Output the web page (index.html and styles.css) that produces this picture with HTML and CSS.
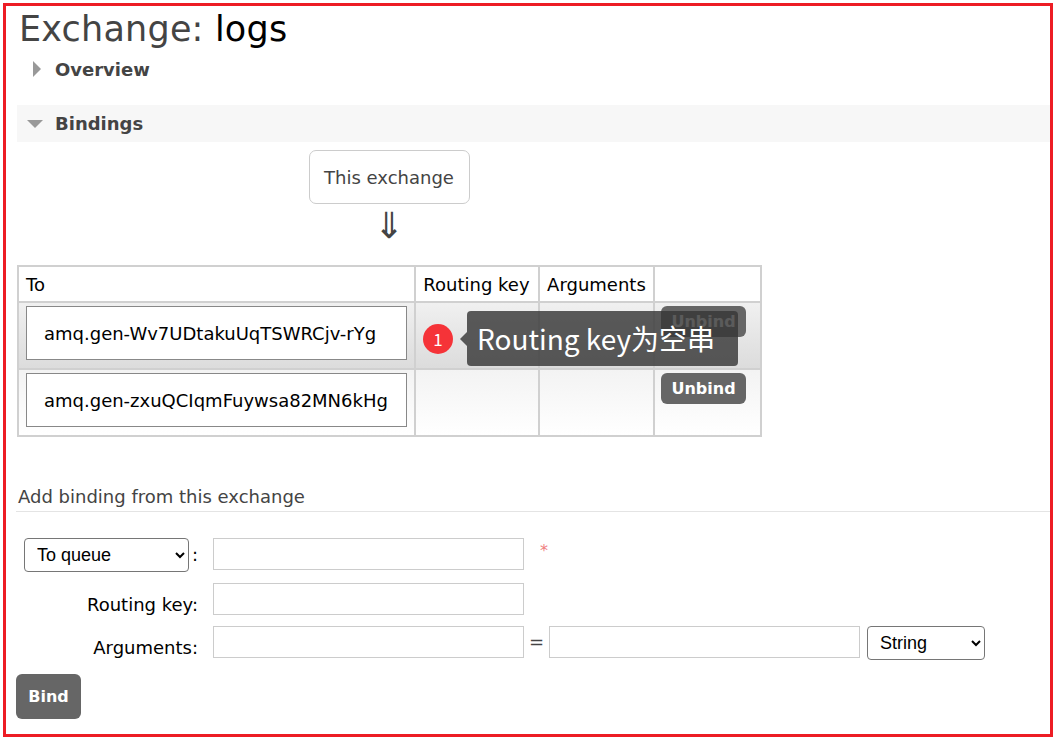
FILE: index.html
```html
<!DOCTYPE html>
<html>
<head>
<meta charset="utf-8">
<link rel="stylesheet" href="styles.css">
</head>
<body>
<div class="frame">
  <h1 class="title">Exchange: <b>logs</b></h1>
  <div class="section closed">
    <span class="tri-right"></span><span class="sec-title">Overview</span>
  </div>
  <div class="section open">
    <span class="tri-down"></span><span class="sec-title">Bindings</span>
  </div>
  <div class="bindings">
    <div class="exbox-wrap">
      <div class="exbox">This exchange</div>
      <div class="arrow">⇓</div>
    </div>
    <div class="table-wrap">
      <table class="list">
        <thead>
          <tr><th class="c-to">To</th><th class="c-rk">Routing key</th><th class="c-args">Arguments</th><th class="c-act"></th></tr>
        </thead>
        <tbody>
          <tr class="alt1">
            <td><span class="qbox">amq.gen-Wv7UDtakuUqTSWRCjv-rYg</span></td>
            <td></td><td></td>
            <td class="act"><button class="btn small">Unbind</button></td>
          </tr>
          <tr class="alt2">
            <td><span class="qbox">amq.gen-zxuQCIqmFuywsa82MN6kHg</span></td>
            <td></td><td></td>
            <td class="act"><button class="btn small">Unbind</button></td>
          </tr>
        </tbody>
      </table>
      <span class="badge">1</span>
      <div class="tip">Routing key为空串</div>
    </div>
    <h3 class="add-title">Add binding from this exchange</h3>
    <div class="form">
      <div class="lbl lbl-sel"><select class="sel sel-dest"><option>To queue</option></select><span class="colon">:</span></div>
      <div class="field"><input class="inp" type="text"><span class="req">*</span></div>
      <div class="lbl">Routing key:</div>
      <div class="field"><input class="inp" type="text"></div>
      <div class="lbl">Arguments:</div>
      <div class="field"><input class="inp" type="text"><span class="eq">=</span><input class="inp" type="text"><select class="sel sel-type"><option>String</option></select></div>
    </div>
    <div class="actions"><button class="btn bind">Bind</button></div>
  </div>
</div>
</body>
</html>
```

FILE: styles.css
```css
html, body {
  margin: 0;
  padding: 0;
  background: #fff;
}
body {
  font-family: "DejaVu Sans", Verdana, sans-serif;
  color: #444;
}
.frame {
  margin: 3px;
  width: 1044px;
  height: 728px;
  border: 3px solid #ed1c24;
  overflow: hidden;
  position: relative;
}
.title {
  margin: 2px 0 0 13px;
  font-size: 35px;
  font-weight: normal;
  line-height: 42px;
  color: #444;
  letter-spacing: 0.2px;
}
.title b {
  font-weight: normal;
  color: #000;
}
.section {
  display: flex;
  align-items: center;
  height: 37px;
  margin-left: 11px;
}
.section.closed {
  height: 30px;
  margin-top: 4px;
}
.section.open {
  background: #f7f7f7;
  margin-top: 21px;
}
.tri-right {
  width: 0;
  height: 0;
  border-top: 8px solid transparent;
  border-bottom: 8px solid transparent;
  border-left: 8px solid #999;
  margin-left: 16px;
  margin-right: 14px;
}
.tri-down {
  width: 0;
  height: 0;
  border-left: 8px solid transparent;
  border-right: 8px solid transparent;
  border-top: 8px solid #999;
  margin-left: 10px;
  margin-right: 12px;
}
.sec-title {
  font-weight: bold;
  font-size: 18px;
  color: #444;
}
.bindings {
  padding-left: 11px;
}
.exbox-wrap {
  display: flex;
  flex-direction: column;
  align-items: center;
  width: 744px;
  margin-top: 8px;
}
.exbox {
  width: 159px;
  height: 52px;
  border: 1px solid #ccc;
  border-radius: 7px;
  display: flex;
  align-items: center;
  justify-content: center;
  font-size: 18px;
  color: #444;
}
.arrow {
  font-size: 36px;
  line-height: 40px;
  height: 40px;
  color: #444;
  margin-top: 2px;
}
.table-wrap {
  position: relative;
  margin-top: 19px;
  width: 745px;
}
.list {
  border-collapse: collapse;
  border: 2px solid #d0d0d0;
  font-size: 18px;
  color: #000;
}
.list th, .list td {
  border: 2px solid #d0d0d0;
  text-align: left;
  font-weight: normal;
  padding: 0;
  vertical-align: top;
}
.list th {
  height: 34px;
  padding: 0 7px;
  vertical-align: middle;
  background: #fff;
}
.c-to { width: 382px; }
.c-rk { width: 108px; }
.c-args { width: 99px; }
.c-act { width: 91px; }
.list td {
  height: 62px;
}
.list td:first-child {
  padding: 3px 7px 0 7px;
}
.alt1 td {
  background: linear-gradient(#f0f0f0, #dcdcdc);
}
.alt2 td {
  background: linear-gradient(#f3f3f3, #fff);
}
.qbox {
  display: flex;
  align-items: center;
  height: 52px;
  border: 1px solid #888;
  background: #fff;
  padding-left: 17px;
  color: #000;
}
.act {
  padding: 3px 0 0 6px !important;
}
.btn {
  font-family: "DejaVu Sans", Verdana, sans-serif;
  font-weight: bold;
  color: #fff;
  background: #666;
  border: none;
  border-radius: 6px;
  font-size: 16px;
  padding: 0;
  cursor: pointer;
}
.btn.small {
  width: 85px;
  height: 31px;
}
.badge {
  position: absolute;
  left: 406px;
  top: 59px;
  width: 30px;
  height: 30px;
  border-radius: 50%;
  background: #f53338;
  color: #fff;
  font-family: "Noto Sans CJK SC", sans-serif;
  font-size: 17px;
  line-height: 30px;
  text-align: center;
}
.tip {
  position: absolute;
  left: 450px;
  top: 46px;
  width: 261px;
  height: 55px;
  padding-left: 10px;
  background: rgba(55, 55, 55, 0.82);
  border-radius: 4px;
  color: #fff;
  font-family: "Noto Sans CJK SC", sans-serif;
  font-size: 28px;
  line-height: 55px;
  white-space: nowrap;
}
.tip::before {
  content: "";
  position: absolute;
  left: -7px;
  top: 21px;
  border-top: 7px solid transparent;
  border-bottom: 7px solid transparent;
  border-right: 7px solid rgba(55, 55, 55, 0.82);
}
.add-title {
  margin: 49px 0 0 -1px;
  padding: 0 0 3px 2px;
  font-size: 18px;
  font-weight: normal;
  color: #444;
  border-bottom: 1px solid #e4e4e4;
  line-height: 22px;
}
.form {
  display: grid;
  grid-template-columns: 181px auto;
  column-gap: 15px;
  row-gap: 11px;
  margin-top: 26px;
  align-items: start;
}
.lbl {
  text-align: right;
  font-size: 18px;
  line-height: 20px;
  padding-top: 12px;
  color: #000;
}
.lbl-sel {
  display: flex;
  align-items: center;
  justify-content: flex-end;
  padding-top: 0;
  line-height: 34px;
  margin-left: -1px;
}
.field {
  display: flex;
  align-items: flex-start;
}
.inp {
  border: 1px solid #ccc;
  padding: 0;
  margin: 0;
  box-sizing: border-box;
  height: 32px;
  width: 311px;
}
.req {
  color: #f08080;
  margin-left: 16px;
  margin-top: 3px;
  font-size: 16px;
}
.colon {
  margin-left: 3px;
  color: #000;
}
.eq {
  width: 25px;
  text-align: center;
  line-height: 32px;
  font-size: 18px;
  color: #444;
}
.sel {
  font-family: "Liberation Sans", Arial, sans-serif;
  font-size: 18px;
  color: #000;
  background: #fff;
  border: 1px solid #767676;
  border-radius: 4px;
  height: 34px;
  padding: 0 6px 0 8px;
  box-sizing: border-box;
  margin: 0;
}
.sel-dest {
  width: 165px;
}
.sel-type {
  width: 118px;
  margin-left: 7px;
}
.actions {
  margin-top: 14px;
  margin-left: -1px;
}
.bind {
  width: 65px;
  height: 45px;
  font-size: 16px;
  display: block;
}
```
